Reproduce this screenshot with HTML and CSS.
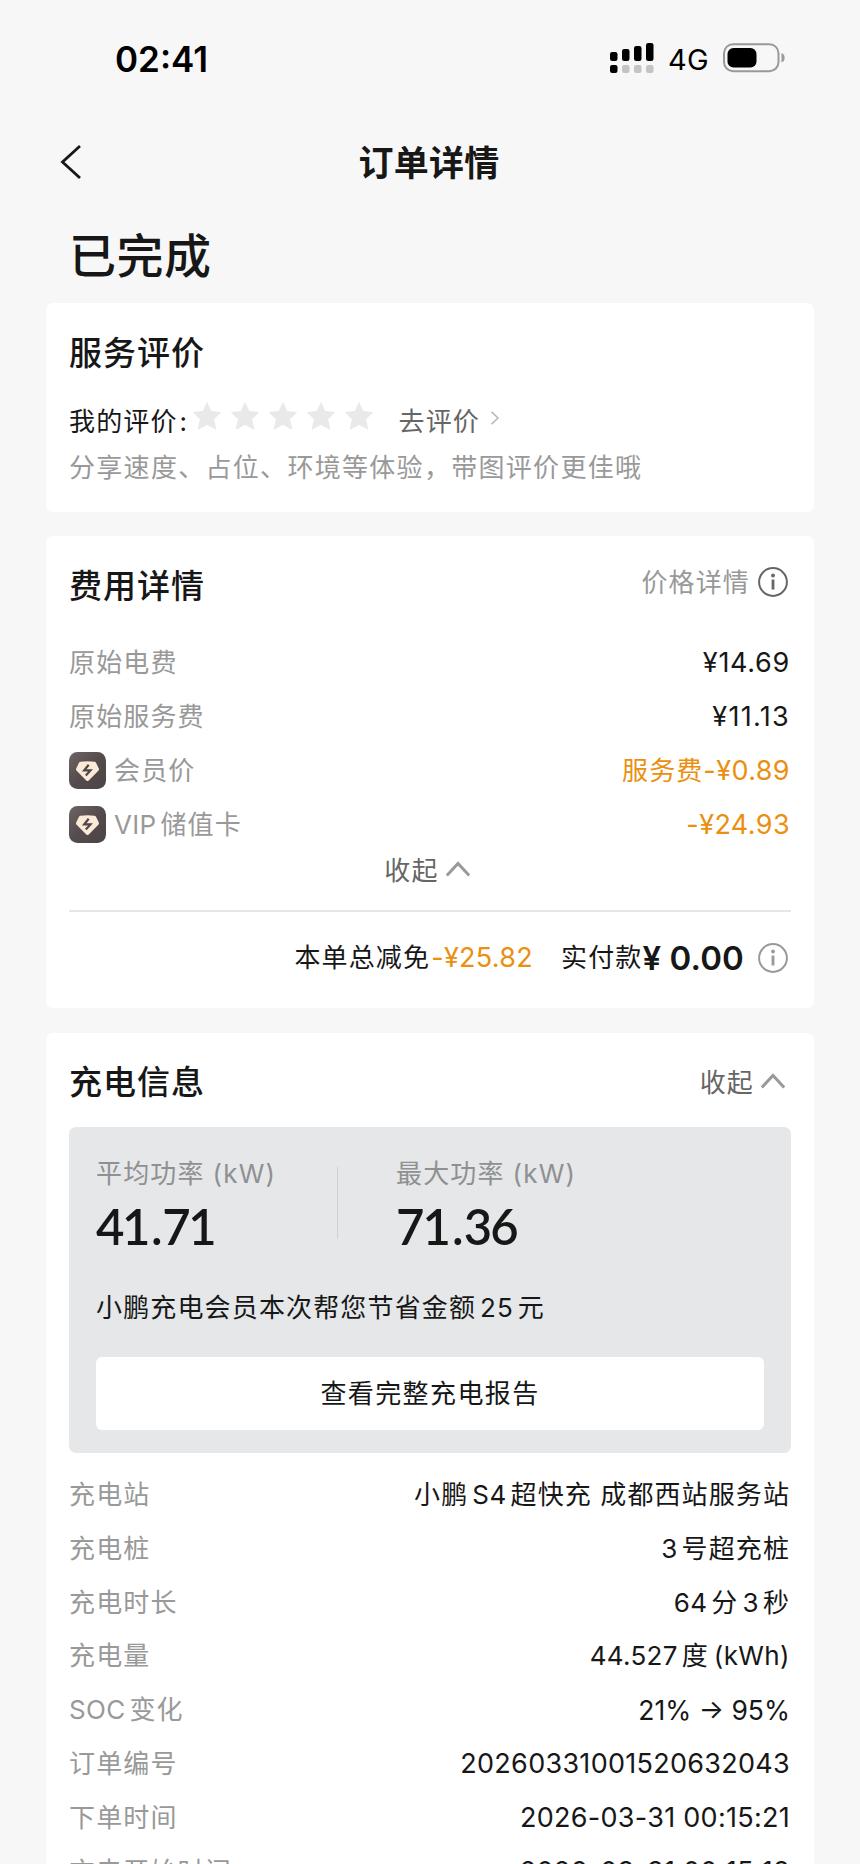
FILE: index.html
```html
<!DOCTYPE html>
<html lang="zh-CN">
<head>
<meta charset="utf-8">
<title>订单详情</title>
<link rel="stylesheet" href="styles.css">
</head>
<body>
<svg class="defs" width="0" height="0">
  <defs>
    <linearGradient id="badge-bg" x1="0" y1="0" x2="1" y2="1">
      <stop offset="0" stop-color="#6f6565"/><stop offset=".5" stop-color="#544b4c"/><stop offset="1" stop-color="#4b4344"/>
    </linearGradient>
    <symbol id="star" viewBox="0 0 28 28"><path d="M14 .8l4 8.700 9.500 1-7 6.800 2.300 9.900-8.800-4.900-8.800 4.900 2.300-9.900-7-6.800 9.500-1z" fill="#e9e9e9" stroke="#e9e9e9" stroke-width="1" stroke-linejoin="round"/></symbol>
    <symbol id="info" viewBox="0 0 30 30"><circle cx="15" cy="15" r="13.900" fill="none" stroke="currentColor" stroke-width="2"/><circle cx="15" cy="8.500" r="1.900" fill="currentColor"/><path d="M15 12.500v10" stroke="currentColor" stroke-width="2.800"/></symbol>
    <symbol id="up" viewBox="0 0 24 16"><path d="M.8 14.500L12 2.500l11.200 12" fill="none" stroke="#999" stroke-width="3"/></symbol>
    <symbol id="badge" viewBox="0 0 37 37"><rect width="37" height="37" rx="8.500" fill="url(#badge-bg)"/><path d="M11.500 9.800q7-.9 14 0 1 .2 1.500 1l2.800 5.700q.5 1-.2 1.900L19.700 28.500q-1.200 1-2.400 0L7.400 18.400q-.7-.9-.2-1.900l2.800-5.700q.5-.8 1.500-1z" fill="#fcead8"/><path d="M19.700 12.800l-4.500 5.600h6.300l-4.700 5.200" fill="none" stroke="#4f4647" stroke-width="2.200"/></symbol>
  </defs>
</svg>
<div class="screen">
  <header class="status">
    <span class="time">02:41</span>
    <span class="status-right">
      <svg width="44" height="31" viewBox="0 0 44 31">
        <g fill="#000"><rect x="0" y="9" width="7.500" height="9" rx="2.200"/><rect x="12" y="6" width="7.500" height="12" rx="2.200"/><rect x="24" y="3" width="7.500" height="15" rx="2.200"/><rect x="36" y="0" width="7.500" height="18" rx="2.200"/><rect x="0" y="22" width="7.500" height="8" rx="2.200"/></g>
        <g fill="#c4c4c4"><rect x="12" y="22" width="7.500" height="8" rx="2.200"/><rect x="24" y="22" width="7.500" height="8" rx="2.200"/><rect x="36" y="22" width="7.500" height="8" rx="2.200"/></g>
      </svg>
      <span class="net">4G</span>
      <svg width="63" height="30" viewBox="0 0 63 30"><rect x="1" y="1.200" width="54.500" height="27" rx="9" fill="none" stroke="#999" stroke-width="2"/><rect x="4.500" y="5" width="29" height="19.500" rx="6" fill="#000"/><path d="M58.500 10v9.500c4.200-1 4.200-8.500 0-9.500z" fill="#999"/></svg>
    </span>
  </header>
  <nav class="nav">
    <svg class="back" width="22" height="36" viewBox="0 0 22 36"><path d="M20 2L2.500 18 20 34" fill="none" stroke="#171717" stroke-width="2.800"/></svg>
    <span class="nav-title">订单详情</span>
  </nav>
  <h1 class="state">已完成</h1>

  <section class="card card-rate">
    <h2>服务评价</h2>
    <div class="rate-row">
      <span class="rate-label">我的评价<span class="colon">:</span></span>
      <span class="stars"><svg><use href="#star"/></svg><svg><use href="#star"/></svg><svg><use href="#star"/></svg><svg><use href="#star"/></svg><svg><use href="#star"/></svg></span>
      <span class="go">去评价</span>
      <svg class="go-arrow" width="10" height="14" viewBox="0 0 10 14"><path d="M1.500.8L8 7l-6.500 6.200" fill="none" stroke="#b5b5b5" stroke-width="1.500"/></svg>
    </div>
    <p class="hint">分享速度、占位、环境等体验，带图评价更佳哦</p>
  </section>

  <section class="card card-fee">
    <div class="head"><h2>费用详情</h2><span class="price-link">价格详情<svg class="info"><use href="#info"/></svg></span></div>
    <div class="rows">
      <div class="row"><span class="key">原始电费</span><span class="val yen wide">¥14.69</span></div>
      <div class="row"><span class="key">原始服务费</span><span class="val yen ones">¥11.13</span></div>
      <div class="row"><span class="key"><svg class="badge"><use href="#badge"/></svg>会员价</span><span class="val off">服务费<span class="yen">-¥0.89</span></span></div>
      <div class="row"><span class="key"><svg class="badge"><use href="#badge"/></svg><span class="pre vip">VIP</span>储值卡</span><span class="val off yen">-¥24.93</span></div>
    </div>
    <div class="fold">收起<svg class="up"><use href="#up"/></svg></div>
    <div class="total">
      <span>本单总减免</span><span class="off cut">-¥25.82</span><span class="pay">实付款</span><span class="sum">¥ 0.00</span><svg class="info"><use href="#info"/></svg>
    </div>
  </section>

  <section class="card card-charge">
    <div class="head"><h2>充电信息</h2><span class="fold-link">收起<svg class="up"><use href="#up"/></svg></span></div>
    <div class="panel">
      <div class="stats">
        <div class="stat"><span class="stat-key">平均功率<span class="unit">(kW)</span></span><span class="stat-val">41<span class="dot">.</span>71</span></div>
        <div class="stat second"><span class="stat-key">最大功率<span class="unit">(kW)</span></span><span class="stat-val v2">71<span class="dot">.</span>36</span></div>
      </div>
      <p class="save">小鹏充电会员本次帮您节省金额<span class="mid">25</span>元</p>
      <div class="report">查看完整充电报告</div>
    </div>
    <div class="rows list">
      <div class="row"><span class="key">充电站</span><span class="val">小鹏<span class="mid">S4</span>超快充 成都西站服务站</span></div>
      <div class="row"><span class="key">充电桩</span><span class="val"><span class="pre">3</span>号超充桩</span></div>
      <div class="row"><span class="key">充电时长</span><span class="val"><span class="pre">64</span>分<span class="mid">3</span>秒</span></div>
      <div class="row"><span class="key">充电量</span><span class="val"><span class="pre">44.527</span>度<span class="kwh">(kWh)</span></span></div>
      <div class="row"><span class="key"><span class="pre">SOC</span>变化</span><span class="val num soc">21% → 95%</span></div>
      <div class="row"><span class="key">订单编号</span><span class="val num">20260331001520632043</span></div>
      <div class="row"><span class="key">下单时间</span><span class="val num">2026-03-31 00:15:21</span></div>
      <div class="row"><span class="key">充电开始时间</span><span class="val num">2026-03-31 00:15:18</span></div>
    </div>
  </section>
</div>
</body>
</html>
```
FILE: styles.css
```css
* { box-sizing: border-box; margin: 0; padding: 0; }
body { background: #f7f7f7; }
.defs { position: absolute; }
svg { display: block; flex: none; }
.screen {
  width: 860px; height: 1864px; overflow: hidden; background: #f7f7f7;
  font-family: Inter, "Noto Sans CJK SC", sans-serif;
  font-size: 26px; line-height: 40px; letter-spacing: 1.150px; color: #171717;
  white-space: nowrap;
}
.status { height: 116px; padding: 0 74px 0 115px; display: flex; align-items: center; justify-content: space-between; color: #000; }
.time { font-size: 35px; font-weight: 600; letter-spacing: 0; padding-top: 1px; }
.status-right { display: flex; align-items: center; }
.net { font-size: 29px; letter-spacing: .3px; font-weight: 400; margin: 3px 14px 0 14px; }
.nav { height: 92px; display: flex; align-items: center; justify-content: center; position: relative; padding: 1px 2px 0 0; }
.back { position: absolute; left: 60px; top: 28px; }
.nav-title { font-size: 35px; font-weight: 700; letter-spacing: .3px; }
.state { height: 95px; padding-left: 69px; font-size: 47px; font-weight: 500; line-height: 96px; letter-spacing: .5px; }
.card { margin: 0 46px; padding: 0 23px; background: #fff; border-radius: 7px; }
h2 { font-size: 33px; font-weight: 500; letter-spacing: 1px; line-height: 50px; }
.card-rate { height: 209px; padding-top: 25px; }
.rate-row { display: flex; height: 40px; margin-top: 24px; align-items: center; }
.rate-label { width: 123.500px; }
.colon { margin-left: 2px; }
.stars { display: flex; gap: 10px; margin-top: -12px; }
.stars svg { width: 28px; height: 28px; }
.go { margin-left: 26px; color: #666; }
.go-arrow { margin: -8px 0 0 10px; }
.hint { margin-top: 6px; color: #999; letter-spacing: 1.300px; }
.card-fee { margin-top: 24px; height: 472px; padding-top: 25px; }
.head { display: flex; justify-content: space-between; height: 50px; }
.price-link { display: flex; align-items: center; color: #999; height: 43px; }
.info { width: 30px; height: 30px; color: #999; }
.price-link .info { color: #666; margin: -1px 3px 0 8px; }
.rows { margin-top: 25px; }
.row { display: flex; justify-content: space-between; height: 54px; align-items: center; padding-right: 1px; }
.key { display: flex; align-items: center; color: #999; }
.val { letter-spacing: 1.100px; }
.off { color: #eb8f11; }
.yen { letter-spacing: .4px; font-size: 27px; }
.wide { letter-spacing: .7px; }
.ones { letter-spacing: 1.300px; }
.badge { width: 37px; height: 37px; margin: -2px 8px 0 0; }
.pre { margin-right: 4px; letter-spacing: .3px; }
.mid { margin: 0 4px; letter-spacing: .4px; }
.save .mid { letter-spacing: 1px; }
.vip { letter-spacing: .3px; }
.fold { display: flex; justify-content: center; align-items: center; height: 60px; margin: -11px 0 9px; padding-right: 6px; color: #666; }
.up { width: 24px; height: 16px; margin: -4px 0 0 7px; }
.total { display: flex; align-items: center; justify-content: flex-end; height: 94px; border-top: 2px solid #e6e6e6; padding-right: 3px; }
.cut { font-size: 27px; letter-spacing: .3px; margin-left: 1px; }
.pay { margin-left: 28px; }
.sum { font-size: 33px; font-weight: 600; letter-spacing: 0.1px; margin-right: 14px; }
.card-charge { margin-top: 25px; height: 900px; padding-top: 24px; }
.fold-link { display: flex; align-items: center; color: #666; padding: 1px 6px 0 0; }
.panel { margin-top: 20px; height: 326px; padding: 27px 27px 0 27px; border-radius: 7px; background: #e5e7e9; }
.stats { display: flex; height: 96px; }
.stat { width: 241px; display: flex; flex-direction: column; }
.second { position: relative; padding-left: 59px; width: 400px; }
.second::before { content: ""; position: absolute; left: 0; top: 13px; width: 1px; height: 72px; background: #cfd1d3; }
.stat-key { color: #8f9092; }
.unit { margin-left: 8px; }
.stat-val { font-family: Lato, sans-serif; font-size: 49px; font-weight: 600; line-height: 64px; letter-spacing: -2.400px; }
.v2 { letter-spacing: -1.900px; }
.dot { margin: 0 2px 0 3px; }
.save { margin-top: 38px; }
.report { margin-top: 29px; height: 73px; line-height: 74px; text-align: center; background: #fff; border-radius: 6px; letter-spacing: 1.400px; }
.list { margin-top: 15px; }
.list .row { height: 53.850px; }
.num { font-size: 27px; letter-spacing: .280px; }
.soc { font-size: 26.500px; letter-spacing: 0; }
.kwh { margin-left: 5px; letter-spacing: .4px; }
```
